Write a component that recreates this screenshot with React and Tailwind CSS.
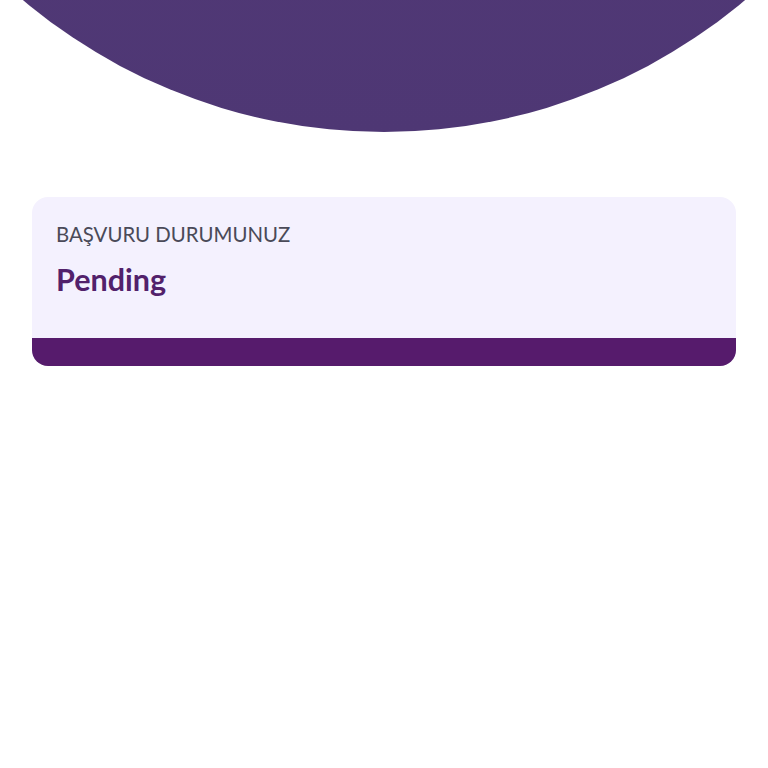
export default function App() {
  return (
    <div className="relative w-full min-h-screen overflow-hidden bg-white" style={{ fontFamily: '"Lato", "Noto Sans", sans-serif' }}>
      <div className="relative h-[132px]">
        <div className="absolute bottom-0 left-1/2 -translate-x-1/2 w-[1120px] h-[1120px] rounded-full bg-gradient-to-b from-[#5a3c7c] to-[#4e3774]" />
      </div>
      <div className="mx-8 mt-[65px] rounded-2xl overflow-hidden bg-[#f4f1fe]">
        <div className="h-[141px] px-6 pt-[23px] flex flex-col">
          <div className="text-[20.4px] leading-7 text-[#4a4a58]">BAŞVURU DURUMUNUZ</div>
          <div className="mt-[15px] text-[30.5px] leading-8 font-bold text-[#52216b]">Pending</div>
        </div>
        <div className="h-[28px] bg-[#561b6c]" />
      </div>
    </div>
  );
}
